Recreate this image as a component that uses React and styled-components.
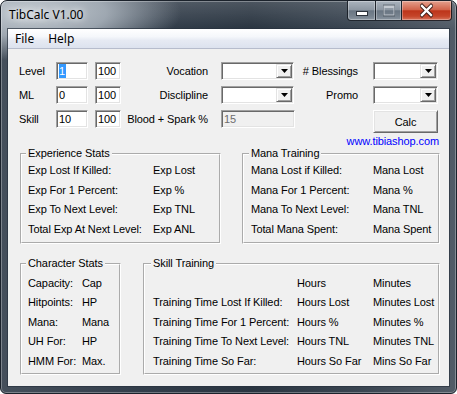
import React from "react";
import styled, { createGlobalStyle } from "styled-components";

const GlobalStyle = createGlobalStyle`
  html, body {
    margin: 0;
    padding: 0;
    background: #ffffff;
  }
  body {
    width: 457px;
    height: 394px;
    overflow: hidden;
  }
`;

const Window = styled.div`
  box-sizing: border-box;
  width: 457px;
  height: 394px;
  display: flex;
  flex-direction: column;
  border: 1px solid #1b222b;
  border-radius: 7px 7px 6px 6px;
  overflow: hidden;
  background:
    radial-gradient(ellipse 150px 48px at 30px 12px, rgba(196, 203, 210, 1) 0%, rgba(180, 189, 198, 0.8) 50%, rgba(180, 189, 198, 0) 100%),
    linear-gradient(180deg, rgba(255, 255, 255, 0.16) 0px, rgba(255, 255, 255, 0) 28px),
    linear-gradient(90deg, #454f5b 0%, #333e4b 30%, #2a3541 55%, #3b4652 80%, #525c67 100%);
  box-shadow: inset 0 0 0 1px rgba(255, 255, 255, 0.3);
`;

const TitleBar = styled.div`
  height: 28px;
  display: flex;
  align-items: flex-start;
  flex-shrink: 0;
`;

const Title = styled.div`
  margin: 6px 0 0 8px;
  font-family: "Segoe UI", "Noto Sans", "Liberation Sans", sans-serif;
  font-size: 12px;
  line-height: 15px;
  color: #000;
  text-shadow: 0 0 6px rgba(255, 255, 255, 0.9), 0 0 10px rgba(255, 255, 255, 0.7);
`;

const Captions = styled.div`
  margin-left: auto;
  margin-right: 4px;
  display: flex;
`;

const CaptionButton = styled.div`
  box-sizing: border-box;
  width: ${(p) => p.$w}px;
  height: 20px;
  display: flex;
  align-items: center;
  justify-content: center;
  border: 1px solid rgba(18, 24, 32, 0.9);
  border-top: none;
  border-left-width: ${(p) => (p.$first ? 1 : 0)}px;
  border-radius: ${(p) => p.$radius};
  box-shadow: inset 0 0 0 1px rgba(255, 255, 255, 0.3);
  background: ${(p) =>
    p.$close
      ? "linear-gradient(180deg, #e4a08d 0%, #d2654c 45%, #bd351b 52%, #c5452a 80%, #d8755d 100%)"
      : "linear-gradient(180deg, #aab3bd 0%, #8e98a3 45%, #6a7683 52%, #77838f 80%, #8c97a2 100%)"};
`;

const Client = styled.div`
  flex: 1;
  margin: 0 7px 7px 7px;
  display: flex;
  flex-direction: column;
  background: #f0f0f0;
  box-shadow: 0 0 0 1px rgba(40, 50, 62, 0.7);
  font-family: "Liberation Sans", Arial, sans-serif;
  font-size: 11px;
  letter-spacing: -0.1px;
  color: #000;
`;

const MenuBar = styled.div`
  height: 19px;
  display: flex;
  border-bottom: 1px solid #b6bccc;
  background: linear-gradient(180deg, #ffffff 0%, #f5f7fb 40%, #e6eaf3 60%, #dce2ee 100%);
`;

const MenuItem = styled.div`
  padding: 0 7px;
  line-height: 19px;
  letter-spacing: 0;
  font-family: "Segoe UI", "Noto Sans", "Liberation Sans", sans-serif;
  font-size: 12px;
`;

const Content = styled.div`
  padding: 13px 9px 0 11px;
  display: flex;
  flex-direction: column;
`;

const Form = styled.div`
  display: grid;
  grid-template-columns: 37px 39px 26px 100px 73px 79px 65px;
  grid-template-rows: 18px 18px 23px;
  row-gap: 6px;
  align-items: start;
`;

const Label = styled.div`
  line-height: 18px;
  white-space: nowrap;
  text-align: ${(p) => (p.$right ? "right" : "left")};
  padding-right: ${(p) => p.$pr || 0}px;
`;

const TextBox = styled.div`
  box-sizing: border-box;
  width: ${(p) => p.$w}px;
  height: 18px;
  padding-left: 2px;
  border: 1px solid;
  border-color: #a0a0a0 #ffffff #ffffff #a0a0a0;
  box-shadow: inset 1px 1px 0 #696969, inset -1px -1px 0 #e3e3e3;
  background: ${(p) => (p.$disabled ? "#f0f0f0" : "#ffffff")};
  color: ${(p) => (p.$disabled ? "#6d6d6d" : "#000")};
  line-height: 16px;
  white-space: nowrap;
  overflow: hidden;
`;

const Selected = styled.span`
  display: inline-block;
  background: #3399ff;
  color: #fff;
  line-height: 14px;
  margin-top: 1px;
  padding-right: 1px;
`;

const Combo = styled.div`
  box-sizing: border-box;
  width: ${(p) => p.$w}px;
  height: 18px;
  padding: 1px;
  display: flex;
  justify-content: flex-end;
  border: 1px solid;
  border-color: #a0a0a0 #ffffff #ffffff #a0a0a0;
  box-shadow: inset 1px 1px 0 #696969, inset -1px -1px 0 #e3e3e3;
  background: #ffffff;
`;

const DropButton = styled.div`
  box-sizing: border-box;
  width: 16px;
  height: 14px;
  display: flex;
  align-items: center;
  justify-content: center;
  background: #f0f0f0;
  border: 1px solid;
  border-color: #e3e3e3 #696969 #696969 #e3e3e3;
  box-shadow: inset 1px 1px 0 #ffffff, inset -1px -1px 0 #a0a0a0;
`;

const Button = styled.div`
  box-sizing: border-box;
  width: 65px;
  height: 23px;
  display: flex;
  align-items: center;
  justify-content: center;
  background: #f0f0f0;
  border: 1px solid;
  border-color: #ffffff #696969 #696969 #ffffff;
  box-shadow: inset 1px 1px 0 #e3e3e3, inset -1px -1px 0 #a0a0a0;
`;

const Link = styled.div`
  margin-top: 2px;
  padding-right: 1px;
  line-height: 12px;
  text-align: right;
  color: #0000ff;
`;

const GroupRow = styled.div`
  display: flex;
  gap: ${(p) => p.$gap}px;
  margin: ${(p) => p.$mt}px 0 0 1px;
`;

const Group = styled.fieldset`
  box-sizing: border-box;
  width: ${(p) => p.$w}px;
  min-width: 0;
  margin: 0;
  padding: ${(p) => p.$pt}px 0 ${(p) => p.$pb}px ${(p) => p.$pl}px;
  border: 2px groove #ffffff;
`;

const Legend = styled.legend`
  padding: 0 2px;
  margin-left: -2px;
  line-height: 13px;
`;

const Rows = styled.div`
  display: grid;
  grid-template-columns: ${(p) => p.$cols};
  grid-auto-rows: 19.5px;
  line-height: 19.5px;
  white-space: nowrap;
`;

const DownArrow = () => (
  <svg width="7" height="4" viewBox="0 0 7 4">
    <polygon points="0,0 7,0 3.5,4" fill="#000" />
  </svg>
);

const MinGlyph = () => (
  <svg width="12" height="20" viewBox="0 0 12 20">
    <rect x="0.5" y="10.5" width="11" height="4" fill="#fff" stroke="#2c333c" />
  </svg>
);

const MaxGlyph = () => (
  <svg width="12" height="20" viewBox="0 0 12 20">
    <rect x="1" y="5" width="10" height="9" fill="none" stroke="#c3c9d0" strokeWidth="1" />
    <rect x="1" y="5" width="10" height="2" fill="#c3c9d0" />
    <rect x="0" y="4" width="12" height="11" fill="none" stroke="rgba(40,48,58,0.45)" strokeWidth="1" />
  </svg>
);

const CloseGlyph = () => (
  <svg width="13" height="20" viewBox="0 0 13 20">
    <path d="M2 5 L11 14 M11 5 L2 14" stroke="#3a1a14" strokeWidth="4.2" strokeLinecap="square" />
    <path d="M2 5 L11 14 M11 5 L2 14" stroke="#ffffff" strokeWidth="2.4" strokeLinecap="square" />
  </svg>
);

const exp = [
  ["Exp Lost If Killed:", "Exp Lost"],
  ["Exp For 1 Percent:", "Exp %"],
  ["Exp To Next Level:", "Exp TNL"],
  ["Total Exp At Next Level:", "Exp ANL"],
];

const mana = [
  ["Mana Lost if Killed:", "Mana Lost"],
  ["Mana For 1 Percent:", "Mana %"],
  ["Mana To Next Level:", "Mana TNL"],
  ["Total Mana Spent:", "Mana Spent"],
];

const chars = [
  ["Capacity:", "Cap"],
  ["Hitpoints:", "HP"],
  ["Mana:", "Mana"],
  ["UH For:", "HP"],
  ["HMM For:", "Max."],
];

const skills = [
  ["", "Hours", "Minutes"],
  ["Training Time Lost If Killed:", "Hours Lost", "Minutes Lost"],
  ["Training Time For 1 Percent:", "Hours %", "Minutes %"],
  ["Training Time To Next Level:", "Hours TNL", "Minutes TNL"],
  ["Training Time So Far:", "Hours So Far", "Mins So Far"],
];

function App() {
  return (
    <>
      <GlobalStyle />
      <Window>
        <TitleBar>
          <Title>TibCalc V1.00</Title>
          <Captions>
            <CaptionButton $w={29} $first $radius="0 0 0 4px">
              <MinGlyph />
            </CaptionButton>
            <CaptionButton $w={26} $radius="0">
              <MaxGlyph />
            </CaptionButton>
            <CaptionButton $w={50} $close $radius="0 0 4px 0">
              <CloseGlyph />
            </CaptionButton>
          </Captions>
        </TitleBar>
        <Client>
          <MenuBar>
            <MenuItem>File</MenuItem>
            <MenuItem>Help</MenuItem>
          </MenuBar>
          <Content>
            <Form>
              <Label>Level</Label>
              <TextBox $w={32}>
                <Selected>1</Selected>
              </TextBox>
              <TextBox $w={26}>100</TextBox>
              <Label $right $pr={13}>Vocation</Label>
              <Combo $w={73}>
                <DropButton>
                  <DownArrow />
                </DropButton>
              </Combo>
              <Label $right $pr={15}># Blessings</Label>
              <Combo $w={65}>
                <DropButton>
                  <DownArrow />
                </DropButton>
              </Combo>

              <Label>ML</Label>
              <TextBox $w={32}>0</TextBox>
              <TextBox $w={26}>100</TextBox>
              <Label $right $pr={13}>Disclipline</Label>
              <Combo $w={73}>
                <DropButton>
                  <DownArrow />
                </DropButton>
              </Combo>
              <Label $right $pr={15}>Promo</Label>
              <Combo $w={65}>
                <DropButton>
                  <DownArrow />
                </DropButton>
              </Combo>

              <Label>Skill</Label>
              <TextBox $w={32}>10</TextBox>
              <TextBox $w={26}>100</TextBox>
              <Label $right $pr={13}>Blood + Spark %</Label>
              <TextBox $w={74} $disabled>
                15
              </TextBox>
              <div />
              <Button>Calc</Button>
            </Form>
            <Link>www.tibiashop.com</Link>
            <GroupRow $gap={21} $mt={0}>
              <Group $w={201} $pt={1} $pb={3} $pl={6}>
                <Legend>Experience Stats</Legend>
                <Rows $cols="125px auto">
                  {exp.map(([a, b]) => (
                    <React.Fragment key={a}>
                      <span>{a}</span>
                      <span>{b}</span>
                    </React.Fragment>
                  ))}
                </Rows>
              </Group>
              <Group $w={198} $pt={1} $pb={3} $pl={7}>
                <Legend>Mana Training</Legend>
                <Rows $cols="122px auto">
                  {mana.map(([a, b]) => (
                    <React.Fragment key={a}>
                      <span>{a}</span>
                      <span>{b}</span>
                    </React.Fragment>
                  ))}
                </Rows>
              </Group>
            </GroupRow>
            <GroupRow $gap={22} $mt={13}>
              <Group $w={101} $pt={3.5} $pb={2} $pl={6}>
                <Legend>Character Stats</Legend>
                <Rows $cols="54px auto">
                  {chars.map(([a, b]) => (
                    <React.Fragment key={a}>
                      <span>{a}</span>
                      <span>{b}</span>
                    </React.Fragment>
                  ))}
                </Rows>
              </Group>
              <Group $w={297} $pt={3.5} $pb={2} $pl={8}>
                <Legend>Skill Training</Legend>
                <Rows $cols="144px 76px auto">
                  {skills.map(([a, b, c]) => (
                    <React.Fragment key={b}>
                      <span>{a}</span>
                      <span>{b}</span>
                      <span>{c}</span>
                    </React.Fragment>
                  ))}
                </Rows>
              </Group>
            </GroupRow>
          </Content>
        </Client>
      </Window>
    </>
  );
}

export default App;
